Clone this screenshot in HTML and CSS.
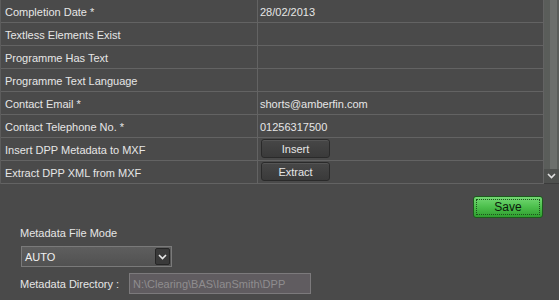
FILE: index.html
```html
<!DOCTYPE html>
<html lang="en">
<head>
    <meta charset="UTF-8">
    <title>DPP Metadata</title>
    <link rel="stylesheet" href="styles.css">
</head>
<body>
<div class="grid-panel">
    <div class="grid">
        <div class="row"><div class="label">Completion Date *</div><div class="value">28/02/2013</div></div>
        <div class="row"><div class="label">Textless Elements Exist</div><div class="value"></div></div>
        <div class="row"><div class="label">Programme Has Text</div><div class="value"></div></div>
        <div class="row"><div class="label">Programme Text Language</div><div class="value"></div></div>
        <div class="row"><div class="label">Contact Email *</div><div class="value">shorts@amberfin.com</div></div>
        <div class="row"><div class="label">Contact Telephone No. *</div><div class="value">01256317500</div></div>
        <div class="row"><div class="label">Insert DPP Metadata to MXF</div><div class="value"><a class="grid-button">Insert</a></div></div>
        <div class="row"><div class="label">Extract DPP XML from MXF</div><div class="value"><a class="grid-button">Extract</a></div></div>
    </div>
    <div class="scrollbar">
        <div class="track"></div>
        <div class="arrow">
            <svg width="9" height="6" viewBox="0 0 9 6"><path d="M1 1 L4.5 4.5 L8 1" fill="none" stroke="#e0e0e0" stroke-width="1.6"/></svg>
        </div>
    </div>
</div>

<div class="settings">
    <div class="save-row">
        <a class="save-button"><span>Save</span></a>
    </div>
    <div class="field-label">Metadata File Mode</div>
    <div class="dropdown">
        <span>AUTO</span>
        <div class="dropdown-arrow">
            <svg width="9" height="6" viewBox="0 0 9 6"><path d="M1 1 L4.5 4.5 L8 1" fill="none" stroke="#e8e8e8" stroke-width="1.6"/></svg>
        </div>
    </div>
    <div class="dir-row">
        <span class="dir-label">Metadata Directory :</span>
        <div class="dir-input">N:\Clearing\BAS\IanSmith\DPP</div>
    </div>
</div>
</body>
</html>
```

FILE: styles.css
```css
body {
    font-family: "Liberation Sans", Arial, sans-serif;
    font-size: 11px;
    margin: 0;
    padding: 0;
    color: #e6e6e6;
    background-color: #4a4a4a;
    overflow: hidden;
}
.grid-panel {
    display: flex;
    height: 184px;
}
.grid {
    width: 542px;
    border-left: 1px solid #5c5c5c;
    border-right: 1px solid #636363;
}
.row {
    display: flex;
    height: 22px;
    border-bottom: 1px solid #636363;
}
.label {
    width: 252px;
    padding-left: 4px;
    line-height: 24px;
    border-right: 1px solid #636363;
    white-space: nowrap;
}
.value {
    flex: 1;
    padding-left: 2px;
    line-height: 24px;
}
.grid-button {
    display: block;
    width: 67px;
    height: 17px;
    margin-top: 1px;
    margin-left: 1px;
    line-height: 18px;
    text-align: center;
    color: #e6e6e6;
    background: linear-gradient(#474747, #3a3a3a);
    border: 1px solid #2a2a2a;
    border-radius: 3px;
    box-shadow: inset 0 1px 0 #555;
}
.scrollbar {
    width: 15px;
    display: flex;
    flex-direction: column;
    background: #5a5d5a;
    border-bottom: 1px solid #3c3c3c;
}
.track {
    flex: 1;
    margin-left: 6px;
    margin-right: 2px;
    background: #6c6f6c;
}
.arrow {
    height: 14px;
    display: flex;
    align-items: center;
    justify-content: center;
    background: #4e504e;
}
.settings {
    padding: 12px 16px 0 20px;
    display: flex;
    flex-direction: column;
}
.save-row {
    display: flex;
    justify-content: flex-end;
}
.save-button {
    display: block;
    width: 68px;
    height: 20px;
    padding: 0;
    background: linear-gradient(#74d874, #4cbf4c 50%, #2f9f2f);
    border: 1px solid #1d5a1d;
    border-radius: 3px;
    color: #0c1a0c;
    font-size: 12px;
    text-align: center;
    box-sizing: content-box;
}
.save-button span {
    display: block;
    margin: 2px;
    height: 14px;
    line-height: 15px;
    border: 1px dotted #1f4f1f;
}
.field-label {
    margin-top: 8px;
    line-height: 14px;
    height: 14px;
}
.dropdown {
    margin-top: 6px;
    margin-left: 1px;
    width: 149px;
    height: 19px;
    border: 1px solid #7a7a7a;
    background: linear-gradient(#5e5e5e, #515151);
    display: flex;
    align-items: center;
    justify-content: space-between;
    color: #f0f0f0;
}
.dropdown span {
    padding-left: 3px;
    padding-top: 1px;
}
.dropdown-arrow {
    width: 13px;
    height: 15px;
    margin-right: 1px;
    background: #3a3a3a;
    border: 1px solid #262626;
    border-radius: 2px;
    display: flex;
    align-items: center;
    justify-content: center;
}
.dir-row {
    margin-top: 6px;
    display: flex;
    align-items: center;
}
.dir-label {
    width: 109px;
}
.dir-input {
    width: 177px;
    height: 19px;
    line-height: 20px;
    padding-left: 3px;
    border: 1px solid #7c7a7c;
    background: #605c60;
    color: #8f8d8f;
}
```
